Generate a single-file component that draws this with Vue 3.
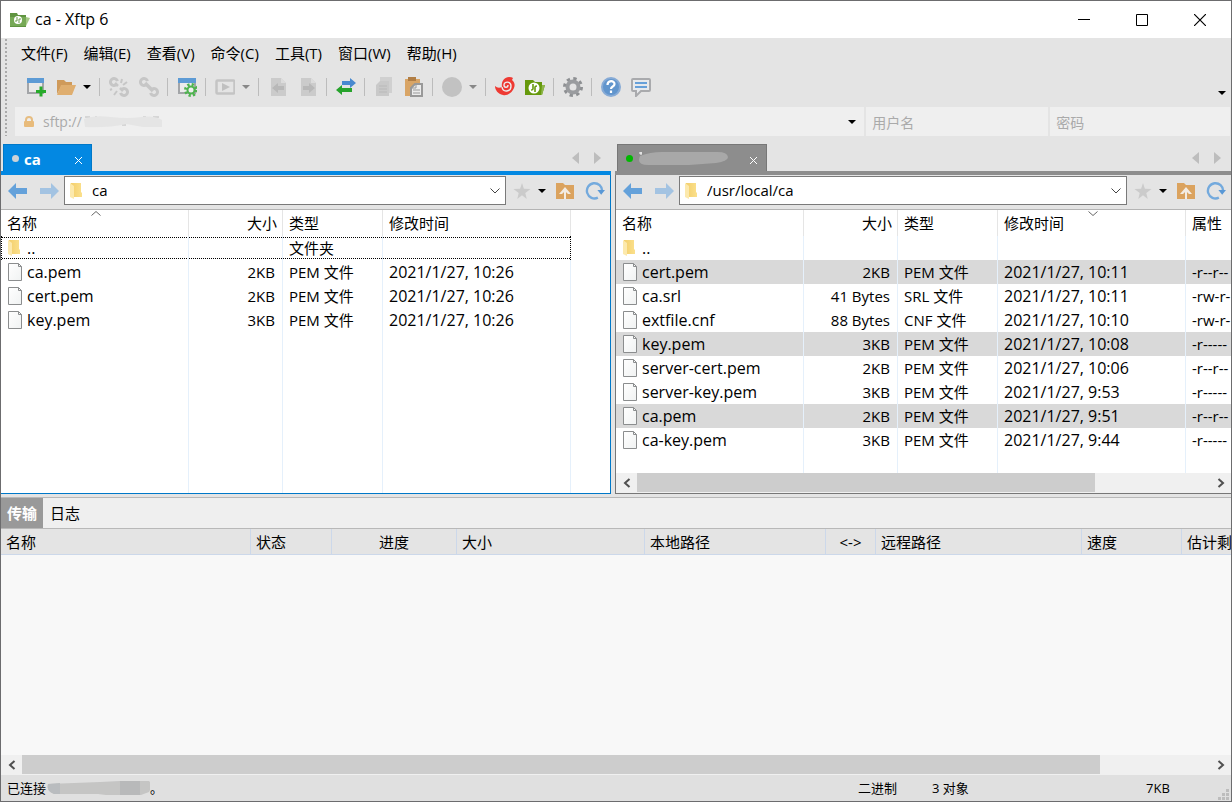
<script setup>
import { ref } from 'vue'

const icons = {
  newSession: '<rect x="2" y="2" width="15" height="14" fill="#e9e9e9" stroke="#a3a5a8" stroke-width="2"/><rect x="1" y="1" width="17" height="5" fill="#5d9bd5"/><path d="M15 9.500v10M10 14.500h10" stroke="#27ab2b" stroke-width="3"/>',
  open: '<path d="M1 17V3h7l2 2h6v3H6z" fill="#cf9a5a"/><path d="M5 8h15l-4 10H1z" fill="#dfae6f"/>',
  unlink: '<g fill="none" stroke="#c6c6c6" stroke-width="3"><circle cx="5" cy="5" r="3.500" stroke-dasharray="17 5" transform="rotate(60 5 5)"/><circle cx="15" cy="15" r="3.500" stroke-dasharray="17 5" transform="rotate(240 15 15)"/><path d="M6 6l3 3M11 11l3 3" stroke-width="2.500"/><path d="M12 6l1-4M14 8l4-3M3 12l-2 1M8 14l-3 4" stroke-width="2"/></g>',
  link: '<g fill="none" stroke="#c6c6c6" stroke-width="3"><circle cx="5" cy="5" r="3.500" stroke-dasharray="17 5" transform="rotate(60 5 5)"/><circle cx="15" cy="15" r="3.500" stroke-dasharray="17 5" transform="rotate(240 15 15)"/><path d="M6 6l8 8" stroke-width="3.500"/></g>',
  settingsWindow: '<rect x="2" y="2" width="16" height="14" fill="#ececec" stroke="#a3a5a8" stroke-width="2"/><rect x="1" y="1" width="18" height="5" fill="#5d9bd5"/><circle cx="14" cy="13" r="5.500" fill="none" stroke="#4eb34e" stroke-width="3" stroke-dasharray="2.200 2.120"/><circle cx="14" cy="13" r="3.500" fill="#eee" stroke="#4eb34e" stroke-width="2"/>',
  play: '<rect x="1.500" y="3.500" width="18" height="13" rx="1" fill="none" stroke="#c4c4c4" stroke-width="2.500"/><path d="M7 6l8 4-8 4z" fill="#c0c0c0"/>',
  pageLeft: '<path d="M3 1h10l5 5v13H3z" fill="#cbcbcb"/><path d="M13 1v5h5" fill="#dcdcdc"/><path d="M4 11l6-5v3h6v4h-6v3z" fill="#b8b8b8"/>',
  pageRight: '<path d="M3 1h10l5 5v13H3z" fill="#cbcbcb"/><path d="M13 1v5h5" fill="#dcdcdc"/><path d="M17 11l-6-5v3H5v4h6v3z" fill="#b8b8b8"/>',
  transfer: '<path d="M6 4h8V1l6 5-6 5V8H6z" fill="#4889cf"/><path d="M16 11H6V8l-6 5 6 5v-3h10z" fill="#27a32c"/>',
  copy: '<path d="M6 0h12v16H6z" fill="#d0d0d0"/><path d="M6 4l-4 4v11h13V4z" fill="#c9c9c9"/><path d="M5 9h8M5 12h8M5 15h8" stroke="#b9b9b9"/>',
  paste: '<path d="M1 2h15v17H1z" fill="#d9a566"/><path d="M4 0h8v4H4z" fill="#b17e45"/><path d="M11 7h7v12H7v-8z" fill="#ececec" stroke="#999" stroke-width="2"/><path d="M12 7v4H8M9 13h7M9 16h7" stroke="#999" fill="none"/>',
  disc: '<circle cx="10" cy="10" r="10" fill="#c2c2c2"/>',
  swirl: '<path d="M0 9q3 3 7 1c-1-5 2-10 7-10q3 0 4 1l-1 2c3 3 3 5 2 8-2 5-7 8-11 7-5-1-8-5-8-9z" fill="#ee3a33"/><path d="M7 10c1 6 9 5 9-1 0-5-7-5-7-1 0 3 4 3 4 0" fill="none" stroke="#ededed" stroke-width="1.400"/>',
  greenFolder: '<path d="M0 3h8l2 2h7v3h3l-3 10H0z" fill="#66990c"/><path d="M17 8l-1 10h1l3-10z" fill="#8fb64c"/><circle cx="9" cy="11" r="5.500" fill="#fff"/><path d="M8 7v5q0 1-2 1M10 15v-5q0-1 2-1" fill="none" stroke="#66990c" stroke-width="1.600"/>',
  gear: '<circle cx="10" cy="10" r="8.500" fill="none" stroke="#8e9093" stroke-width="3" stroke-dasharray="3.340 3.340"/><circle cx="10" cy="10" r="5.500" fill="none" stroke="#9a9c9f" stroke-width="4"/>',
  help: '<circle cx="10" cy="10" r="9" fill="#6195cd" stroke="#87abd6" stroke-width="2"/><path d="M6.500 8c0-5 7-5 7-1 0 3-3.500 2-3.500 5M10 13.500v2.500" fill="none" stroke="#fff" stroke-width="2.200"/>',
  chat: '<path d="M2 2h16q1 0 1 1v10q0 1-1 1h-8l-5 5v-5H2q-1 0-1-1V3q0-1 1-1z" fill="#e7e9ec" stroke="#a9aaad" stroke-width="2"/><path d="M4 6h12M4 10h12" stroke="#66a0d9" stroke-width="2"/>'
}
const nav = {
  back: '<path d="M0 10l8-8v5h11v6H8v5z" fill="#64a1da"/>',
  forward: '<path d="M20 10l-8-8v5H1v6h11v5z" fill="#a3c3e2"/>',
  star: '<path d="M9 1l2 6 7 .500-5.500 4L14 18l-5-4-5 4 1.500-6.500L0 7.500 7 7z" fill="#cbcbcb"/>',
  up: '<path d="M1 2h7l2 2h9v14H1z" fill="#dba35f"/><path d="M4 13l6-7 6 7h-3l-3-3-3 3z" fill="#f3ece3"/><path d="M9 9h2v9H9z" fill="#f3ece3"/>',
  refresh: '<path d="M13.500 17A8 8 0 1 1 18 10" fill="none" stroke="#74aadd" stroke-width="2.500"/><path d="M13 9h8l-4 5z" fill="#5998d6"/>'
}
const menus = ['文件(F)', '编辑(E)', '查看(V)', '命令(C)', '工具(T)', '窗口(W)', '帮助(H)']
const tools = [
  ['newSession', '新建'], ['open', '打开'], ['drop', '打开列表'], ['sep'],
  ['unlink', '断开'], ['link', '重新连接'], ['sep'],
  ['settingsWindow', '会话属性'], ['sep'],
  ['play', '执行'], ['dropGray', '执行列表'], ['sep'],
  ['pageLeft', '向左传输'], ['pageRight', '向右传输'], ['sep'],
  ['transfer', '同步'], ['sep'],
  ['copy', '复制'], ['paste', '粘贴'], ['sep'],
  ['disc', '编码'], ['dropGray', '编码列表'], ['sep'],
  ['swirl', 'Xshell'], ['greenFolder', 'Xftp'], ['sep'],
  ['gear', '选项'], ['sep'],
  ['help', '帮助'], ['chat', '反馈']
]
const widths = [188, 94, 100, 188]
const panes = [
  {
    id: 'local', tab: 'ca', path: 'ca', heads: ['名称', '大小', '类型', '修改时间', ''], sort: 'asc', sortCol: 0,
    rows: [
      ['..', '', '文件夹', '', ''],
      ['ca.pem', '2KB', 'PEM 文件', '2021/1/27, 10:26', ''],
      ['cert.pem', '2KB', 'PEM 文件', '2021/1/27, 10:26', ''],
      ['key.pem', '3KB', 'PEM 文件', '2021/1/27, 10:26', '']
    ],
    selected: []
  },
  {
    id: 'remote', tab: '', path: '/usr/local/ca', heads: ['名称', '大小', '类型', '修改时间', '属性'], sort: 'desc', sortCol: 3,
    rows: [
      ['..', '', '', '', ''],
      ['cert.pem', '2KB', 'PEM 文件', '2021/1/27, 10:11', '-r--r--'],
      ['ca.srl', '41 Bytes', 'SRL 文件', '2021/1/27, 10:11', '-rw-r-'],
      ['extfile.cnf', '88 Bytes', 'CNF 文件', '2021/1/27, 10:10', '-rw-r-'],
      ['key.pem', '3KB', 'PEM 文件', '2021/1/27, 10:08', '-r-----'],
      ['server-cert.pem', '2KB', 'PEM 文件', '2021/1/27, 10:06', '-r--r--'],
      ['server-key.pem', '3KB', 'PEM 文件', '2021/1/27, 9:53', '-r-----'],
      ['ca.pem', '2KB', 'PEM 文件', '2021/1/27, 9:51', '-r--r--'],
      ['ca-key.pem', '3KB', 'PEM 文件', '2021/1/27, 9:44', '-r-----']
    ],
    selected: [1, 4, 7]
  }
]
const queue = [['名称', 250], ['状态', 81], ['进度', 125], ['大小', 188], ['本地路径', 181], ['<->', 50], ['远程路径', 206], ['速度', 100], ['估计剩', 0]]
const address = ref('sftp://')
const user = ref('')
const password = ref('')
</script>

<template>
  <div class="window">
    <header class="titlebar">
      <svg class="app-icon" width="20" height="16" viewBox="0 0 20 16"><path d="M0 1h7l1 2h8v12H0z" fill="#5f9440" /><path d="M0 5h16v9H0z" fill="#76a956" /><path d="M16 5l4 1-4 8z" fill="#a5c886" /><circle cx="8" cy="8" r="4" fill="#fff" /><path d="M7 5v4H5M9 11V7h2" fill="none" stroke="#6c9d4b" /></svg>
      <h1>ca - Xftp 6</h1>
      <div class="win-buttons">
        <button aria-label="最小化"><svg width="12" height="12"><path d="M0 5.500h12" stroke="#000" /></svg></button>
        <button aria-label="最大化"><svg width="12" height="12"><path d="M.5.5h11v11H.5z" fill="none" stroke="#000" /></svg></button>
        <button aria-label="关闭"><svg width="12" height="12"><path d="M0 0l12 12M12 0L0 12" stroke="#000" stroke-width="1.200" /></svg></button>
      </div>
    </header>

    <div class="bars">
      <nav class="menubar"><button v-for="m in menus" :key="m">{{ m }}</button></nav>
      <div class="toolbar">
        <template v-for="(t, i) in tools" :key="i">
          <span v-if="t[0] === 'sep'" class="sep"></span>
          <button v-else-if="t[0].startsWith('drop')" class="drop" :class="{ gray: t[0] === 'dropGray' }" :aria-label="t[1]"><span class="caret"></span></button>
          <button v-else class="tool" :aria-label="t[1]"><svg width="20" height="20" viewBox="0 0 20 20" v-html="icons[t[0]]"></svg></button>
        </template>
        <button class="overflow" aria-label="更多按钮"><span class="caret"></span></button>
      </div>
      <div class="address">
        <div class="field host">
          <svg width="10" height="12"><path d="M2 6V4q0-3 3-3t3 3v2" fill="none" stroke="#e6bd82" stroke-width="2" /><rect y="5" width="10" height="6" rx="1" fill="#e8bb7b" /></svg>
          <input v-model="address" aria-label="地址">
          <svg width="80" height="16"><path d="M2 3h5M12 3h2M20 11h4M29 11h3M39 11h4M60 3h3M70 3h6M68 12h8" stroke="#bdbdbd" /><path d="M1 5q10-4 27-2t30 0 21 3v7H60L43 10q-18 4-41 3z" fill="#e5e5e5" /></svg>
          <button aria-label="地址历史"><span class="caret"></span></button>
        </div>
        <input v-model="user" class="field user" placeholder="用户名" aria-label="用户名">
        <input v-model="password" class="field pass" type="password" placeholder="密码" aria-label="密码">
      </div>
    </div>

    <main class="panes">
      <section v-for="p in panes" :key="p.id" class="pane" :class="p.id">
        <div class="tabs">
          <div class="tab">
            <button class="tab-name"><span class="dot"></span><b v-if="p.tab">{{ p.tab }}</b><svg v-else width="92" height="16" role="img" aria-label="远程会话"><path d="M1 2h3M3 1v3" stroke="#fff" /><path d="M2 5q10-4 22-4h56q9 0 10 5 0 4-12 6l-27 2H10q-12 0-8-9z" fill="#a8a8a8" /></svg></button>
            <button class="tab-close" aria-label="关闭标签"><svg width="7" height="7"><path d="M0 0l7 7M7 0L0 7" stroke="#fff" /></svg></button>
          </div>
          <button class="tab-nav" aria-label="上一个标签"><svg width="7" height="12"><path d="M7 0v12L0 6z" fill="#bdbdbd" /></svg></button>
          <button class="tab-nav" aria-label="下一个标签"><svg width="7" height="12"><path d="M0 0v12l7-6z" fill="#bdbdbd" /></svg></button>
        </div>
        <div class="pane-body">
          <div class="navbar">
            <button class="go" aria-label="后退"><svg width="20" height="20" viewBox="0 0 20 20" v-html="nav.back"></svg></button>
            <button class="go" aria-label="前进"><svg width="20" height="20" viewBox="0 0 20 20" v-html="nav.forward"></svg></button>
            <div class="path">
              <svg width="12" height="18"><use href="#folder" /></svg>
              <input :value="p.path" aria-label="路径">
              <button aria-label="路径列表"><svg width="10" height="6"><path d="M.5.5L5 5 9.500.5" fill="none" stroke="#444" /></svg></button>
            </div>
            <button class="star" aria-label="收藏"><svg width="18" height="18" viewBox="0 0 18 19" v-html="nav.star"></svg></button>
            <button class="star-drop" aria-label="收藏列表"><span class="caret"></span></button>
            <button class="act" aria-label="上级目录"><svg width="20" height="20" viewBox="0 0 20 20" v-html="nav.up"></svg></button>
            <button class="act" aria-label="刷新"><svg width="20" height="20" viewBox="0 0 21 20" v-html="nav.refresh"></svg></button>
          </div>
          <table class="files">
            <colgroup><col v-for="(w, i) in widths" :key="i" :style="{ width: w + 'px' }"><col></colgroup>
            <thead>
              <tr>
                <th v-for="(h, i) in p.heads" :key="i" scope="col">{{ h }}<svg v-if="i === p.sortCol" class="sort" width="10" height="5"><path :d="p.sort === 'asc' ? 'M.5 4.500L5 .5l4.500 4' : 'M.5.5l4.500 4 4.500-4'" fill="none" stroke="#666" /></svg></th>
              </tr>
            </thead>
            <tbody>
              <tr v-for="(r, n) in p.rows" :key="n" :class="{ selected: p.selected.includes(n), focus: p.id === 'local' && n === 0 }">
                <td v-for="(c, i) in r" :key="i"><span v-if="i === 0" class="name"><svg v-if="n === 0" width="15" height="18"><use href="#folder" /></svg><svg v-else width="15" height="18"><use href="#file" /></svg>{{ c }}</span><template v-else>{{ c }}</template></td>
              </tr>
            </tbody>
          </table>
          <div class="filler"><span v-for="(w, i) in widths" :key="i" :style="{ width: w + 'px' }"></span></div>
          <div v-if="p.id === 'remote'" class="scroll">
            <button aria-label="向左滚动"><svg width="8" height="10"><path d="M6.500 1L2 5l4.500 4" fill="none" stroke="#505050" stroke-width="2" /></svg></button>
            <div class="track"><div class="thumb remote-thumb"></div></div>
            <button aria-label="向右滚动"><svg width="8" height="10"><path d="M1.500 1L6 5 1.500 9" fill="none" stroke="#505050" stroke-width="2" /></svg></button>
          </div>
        </div>
      </section>
    </main>

    <section class="transfers">
      <div class="log-tabs"><button class="active">传输</button><button>日志</button></div>
      <table class="queue">
        <colgroup><col v-for="q in queue" :key="q[0]" :style="{ width: q[1] ? q[1] + 'px' : 'auto' }"></colgroup>
        <thead><tr><th v-for="q in queue" :key="q[0]" scope="col">{{ q[0] }}</th></tr></thead>
      </table>
      <div class="empty"></div>
      <div class="scroll">
        <button aria-label="向左滚动"><svg width="8" height="10"><path d="M6.500 1L2 5l4.500 4" fill="none" stroke="#505050" stroke-width="2" /></svg></button>
        <div class="track"><div class="thumb queue-thumb"></div></div>
        <button aria-label="向右滚动"><svg width="8" height="10"><path d="M1.500 1L6 5 1.500 9" fill="none" stroke="#505050" stroke-width="2" /></svg></button>
      </div>
    </section>

    <footer class="status">
      <span class="connected">已连接<svg width="104" height="16"><path d="M2 4l26-1 26-1 20-1h29q4 4 0 11l-8 3H60l-8-1H8q-8-3-6-10z" fill="#c5c5c4" /><path d="M2 4l12-1v11H8q-8-3-6-10z" fill="#b9bcbf" /><path d="M74 1h20v14H74z" fill="#b8b9ba" /></svg>。</span>
      <span class="mode">二进制</span><span class="count">3 对象</span><span class="size">7KB</span>
      <svg class="resize" width="12" height="12"><path d="M9 0h3v3H9zM5 4h3v3H5zM9 4h3v3H9zM1 8h3v3H1zM5 8h3v3H5zM9 8h3v3H9z" fill="#bdbdbd" /></svg>
    </footer>

    <svg class="defs" width="0" height="0" aria-hidden="true">
      <defs>
        <linearGradient id="gold"><stop offset="0" stop-color="#f3cf6c" /><stop offset="1" stop-color="#fbe08c" /></linearGradient>
        <linearGradient id="paper" x1="0" y1="0" x2="1" y2="1"><stop offset="0" stop-color="#fff" /><stop offset="1" stop-color="#f0f2f2" /></linearGradient>
        <g id="folder"><path d="M1 1h10v9l1 1v4H1z" fill="url(#gold)" /><path d="M0 1l4 3v13l-4-2z" fill="#fce9ad" /></g>
        <g id="file"><path d="M.5.5h10l3 3v14H.5z" fill="url(#paper)" stroke="#8b8d8e" /><path d="M10.500.5v3h3" fill="none" stroke="#8b8d8e" /></g>
      </defs>
    </svg>
  </div>
</template>

<style>
body {
  margin: 0;
}
</style>

<style scoped>
.window {
  display: flex;
  flex-direction: column;
  box-sizing: border-box;
  min-height: 100vh;
  border: 1px solid #6c6c6e;
  background: #e4e4e4;
  color: #000;
  font: 15px/20px "Open Sans", "Noto Sans CJK SC", sans-serif;
  overflow: hidden;
}
.window * {
  box-sizing: border-box;
}
svg {
  display: block;
  flex: none;
}
.defs {
  position: absolute;
}
button,
input {
  margin: 0;
  padding: 0;
  border: 0;
  background: none;
  color: inherit;
  font: inherit;
}
button {
  display: flex;
  flex: none;
  align-items: center;
  justify-content: center;
}
input {
  min-width: 0;
}
.caret {
  border: 4px solid transparent;
  border-top-color: #000;
  border-bottom: 0;
}
.gray .caret {
  border-top-color: #888;
}

.titlebar {
  display: flex;
  align-items: center;
  height: 37px;
  padding: 0 2px 0 9px;
  background: #fff;
}
h1 {
  margin: 0 0 0 5px;
  padding-bottom: 1px;
  font-size: 16px;
  font-weight: 400;
}
.win-buttons {
  display: flex;
  margin-left: auto;
}
.win-buttons button {
  width: 58px;
  height: 35px;
}

.bars {
  padding-left: 14px;
  background: radial-gradient(circle at 2px 2px, #aaa 1px, transparent 1px) 3px 0 / 4px 4px repeat-y;
}
.menubar {
  display: flex;
  gap: 16px;
  height: 30px;
  padding-left: 6px;
}
.toolbar {
  display: flex;
  align-items: center;
  height: 39px;
  padding: 0 0 1px 6px;
}
.tool {
  width: 30px;
  height: 24px;
}
.drop {
  width: 15px;
  height: 24px;
  padding-right: 3px;
}
.sep {
  width: 1px;
  height: 18px;
  margin: 0 4px 0 3px;
  background: #bcbcbc;
}
.overflow {
  align-self: flex-end;
  width: 18px;
  height: 26px;
  margin-left: auto;
}
.address {
  display: flex;
  gap: 2px;
  padding-right: 1px;
  color: #aaa;
}
.field {
  height: 29px;
  background: #efefef;
}
.host {
  display: flex;
  flex: 841 1 0;
  align-items: center;
  padding-left: 9px;
}
.host input {
  width: 40px;
  margin-left: 9px;
  font-size: 14px;
}
.host button {
  width: 24px;
  height: 28px;
  margin-left: auto;
}
.user {
  flex: 176 1 0;
  padding-left: 6px;
}
.pass {
  flex: 174 1 0;
  padding-left: 6px;
}
.field::placeholder {
  color: #aaa;
  font-size: 14px;
  opacity: 1;
}

.panes {
  display: flex;
  gap: 4px;
  padding-top: 8px;
}
.pane {
  --accent: #0388e2;
  --edge: #0078c8;
  display: flex;
  flex: 610 1 0;
  flex-direction: column;
  min-width: 0;
}
.remote {
  --accent: #8d8d8d;
  --edge: #777;
  flex-grow: 616;
}
.tabs {
  display: flex;
  height: 31px;
  padding: 0 3px 0 2px;
  border-bottom: 4px solid var(--accent);
}
.tab {
  display: flex;
  width: 89px;
  margin-right: auto;
  border: 1px solid var(--edge);
  border-bottom: 0;
  background: var(--accent);
  color: #fff;
}
.remote .tab {
  width: 150px;
}
.tab-name {
  gap: 5px;
  padding: 1px 0 0 8px;
}
.tab-close {
  width: 25px;
  margin: 4px 0 0 auto;
}
.dot {
  width: 7px;
  height: 7px;
  border-radius: 50%;
  background: #cdd3d8;
}
.remote .dot {
  background: #00b800;
}
.tab-nav {
  width: 22px;
}
.pane-body {
  display: flex;
  flex: 1;
  flex-direction: column;
  border-right: 1px solid var(--edge);
  border-bottom: 1px solid var(--edge);
  background: #fff;
  overflow: hidden;
}
.remote .pane-body {
  border-right: 0;
  border-left: 1px solid var(--edge);
}
.navbar {
  display: flex;
  align-items: center;
  height: 35px;
  padding: 0 0 3px 1px;
  border-bottom: 1px solid #b4b4b4;
  background: #e4e4e4;
}
.go {
  width: 31px;
}
.path {
  display: flex;
  flex: 1;
  align-items: center;
  height: 29px;
  min-width: 0;
  padding-left: 5px;
  border: 1px solid #7a7a7a;
  background: #fff;
}
.path input {
  flex: 1;
  margin-left: 10px;
  padding-bottom: 2px;
}
.path button {
  width: 20px;
  height: 26px;
}
.star {
  width: 32px;
}
.star-drop {
  width: 8px;
}
.act {
  width: 30px;
}
.act:nth-last-child(2) {
  margin-left: 4px;
}

table {
  width: 100%;
  table-layout: fixed;
  border-collapse: separate;
  border-spacing: 0;
}
th {
  font-weight: 400;
  text-align: left;
}
th,
td {
  padding: 0 6px;
  overflow: hidden;
  white-space: nowrap;
}
.files th {
  position: relative;
  height: 26px;
  border-right: 1px solid #e5e5e5;
}
.files td {
  height: 24px;
  border-right: 1px solid #e5f0fb;
}
.files td:first-child {
  padding-left: 7px;
}
.files td:first-child,
.files td:nth-child(4) {
  font-size: 16px;
}
.files th:last-child,
.files td:last-child {
  padding-right: 0;
  border-right: 0;
}
.files th:nth-child(2) {
  padding-right: 5px;
  text-align: right;
}
.files td:nth-child(2) {
  padding-right: 7px;
  text-align: right;
}
.sort {
  position: absolute;
  top: 1px;
  left: 50%;
  margin-left: -4px;
}
.name {
  display: flex;
  align-items: center;
  gap: 4px;
}
.selected td {
  background: #d9d9d9;
}
.focus td {
  background: repeating-linear-gradient(90deg, #000 0 1px, transparent 1px 2px) 0 1px / 100% 1px no-repeat, repeating-linear-gradient(90deg, #000 0 1px, transparent 1px 2px) 0 22px / 100% 1px no-repeat;
}
.files .focus td:first-child {
  border-left: 1px dotted #000;
  padding-left: 6px;
}
.focus td:nth-child(4) {
  border-right: 1px dotted #000;
}
.focus td:last-child {
  background: none;
}
.filler {
  display: flex;
  flex: 1 0 21px;
}
.filler span {
  flex: none;
  border-right: 1px solid #e5f0fb;
}
.scroll {
  display: flex;
  height: 20px;
  background: #f0f0f0;
}
.scroll button {
  width: 21px;
}
.track {
  flex: 1;
}
.thumb {
  height: 19px;
  background: #cdcdcd;
}
.remote-thumb {
  width: 80%;
}
.queue-thumb {
  width: 90.7%;
}

.transfers {
  display: flex;
  flex: 1;
  flex-direction: column;
  margin-top: 3px;
  border-top: 1px solid #b8b8b8;
  background: #f8f8f8;
}
.log-tabs {
  display: flex;
  height: 31px;
  border-bottom: 1px solid #b8b8b8;
  background: #efefef;
}
.log-tabs button {
  width: 44px;
}
.log-tabs .active {
  background: #999;
  color: #fff;
  font-weight: 700;
}
.log-tabs button:first-child {
  width: 42px;
}
.queue th {
  height: 26px;
  padding: 0 5px;
  border-right: 1px solid #ccd8ea;
  border-bottom: 1px solid #ccd8ea;
  background: #e4e4e4;
}
.queue th:nth-child(3),
.queue th:nth-child(6) {
  text-align: center;
}
.queue th:last-child {
  padding-right: 0;
  border-right: 0;
}
.empty {
  flex: 1;
}
.status {
  display: flex;
  align-items: center;
  height: 26px;
  padding-left: 6px;
  background: #e0e0e0;
  font-size: 13px;
}
.connected {
  display: flex;
  align-items: center;
  margin-right: auto;
}
.mode {
  width: 74px;
}
.count {
  width: 214px;
}
.size {
  width: 71px;
}
.resize {
  align-self: flex-end;
  margin-right: 2px;
}
</style>
